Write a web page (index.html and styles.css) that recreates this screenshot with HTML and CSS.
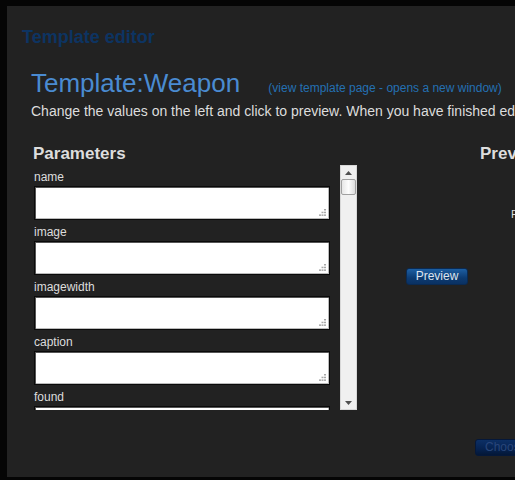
FILE: index.html
```html
<!DOCTYPE html>
<html>
<head>
<meta charset="utf-8">
<link rel="stylesheet" href="styles.css">
</head>
<body>
<div class="panel">
  <h1 class="editor-title">Template editor</h1>
  <div class="content">
    <h2 class="template-name">Template:Weapon <a class="view-link" href="#">(view template page - opens a new window)</a></h2>
    <p class="instructions">Change the values on the left and click to preview. When you have finished editing, click Choose.</p>
    <div class="columns">
      <div class="params-col">
        <h3 class="col-heading">Parameters</h3>
        <div class="scroll-box">
          <div class="param-list">
            <div class="param">
              <div class="param-label">name</div>
              <div class="field"><textarea></textarea><svg class="grip" width="7" height="7" viewBox="0 0 7 7"><rect x="5" y="0" width="2" height="1.5"/><rect x="2.5" y="2.7" width="2" height="1.5"/><rect x="5" y="2.7" width="2" height="1.5"/><rect x="0" y="5.4" width="2" height="1.5"/><rect x="2.5" y="5.4" width="2" height="1.5"/><rect x="5" y="5.4" width="2" height="1.5"/></svg></div>
            </div>
            <div class="param">
              <div class="param-label">image</div>
              <div class="field"><textarea></textarea><svg class="grip" width="7" height="7" viewBox="0 0 7 7"><rect x="5" y="0" width="2" height="1.5"/><rect x="2.5" y="2.7" width="2" height="1.5"/><rect x="5" y="2.7" width="2" height="1.5"/><rect x="0" y="5.4" width="2" height="1.5"/><rect x="2.5" y="5.4" width="2" height="1.5"/><rect x="5" y="5.4" width="2" height="1.5"/></svg></div>
            </div>
            <div class="param">
              <div class="param-label">imagewidth</div>
              <div class="field"><textarea></textarea><svg class="grip" width="7" height="7" viewBox="0 0 7 7"><rect x="5" y="0" width="2" height="1.5"/><rect x="2.5" y="2.7" width="2" height="1.5"/><rect x="5" y="2.7" width="2" height="1.5"/><rect x="0" y="5.4" width="2" height="1.5"/><rect x="2.5" y="5.4" width="2" height="1.5"/><rect x="5" y="5.4" width="2" height="1.5"/></svg></div>
            </div>
            <div class="param">
              <div class="param-label">caption</div>
              <div class="field"><textarea></textarea><svg class="grip" width="7" height="7" viewBox="0 0 7 7"><rect x="5" y="0" width="2" height="1.5"/><rect x="2.5" y="2.7" width="2" height="1.5"/><rect x="5" y="2.7" width="2" height="1.5"/><rect x="0" y="5.4" width="2" height="1.5"/><rect x="2.5" y="5.4" width="2" height="1.5"/><rect x="5" y="5.4" width="2" height="1.5"/></svg></div>
            </div>
            <div class="param">
              <div class="param-label">found</div>
              <div class="field"><textarea></textarea><svg class="grip" width="7" height="7" viewBox="0 0 7 7"><rect x="5" y="0" width="2" height="1.5"/><rect x="2.5" y="2.7" width="2" height="1.5"/><rect x="5" y="2.7" width="2" height="1.5"/><rect x="0" y="5.4" width="2" height="1.5"/><rect x="2.5" y="5.4" width="2" height="1.5"/><rect x="5" y="5.4" width="2" height="1.5"/></svg></div>
            </div>
          </div>
          <div class="scrollbar">
            <svg class="arrow" width="7" height="4" viewBox="0 0 7 4"><path d="M0 4 L3.5 0 L7 4 Z"/></svg>
            <div class="thumb"></div>
            <div class="track"></div>
            <svg class="arrow" width="7" height="4" viewBox="0 0 7 4"><path d="M0 0 L7 0 L3.5 4 Z"/></svg>
          </div>
        </div>
      </div>
      <div class="action-col">
        <button class="btn btn-preview">Preview</button>
      </div>
      <div class="preview-col">
        <h3 class="col-heading preview-heading">Preview</h3>
        <p class="preview-note">Press Preview to see the result</p>
        <button class="btn btn-choose">Choose</button>
      </div>
    </div>
  </div>
</div>
</body>
</html>
```

FILE: styles.css
```css
html, body {
  margin: 0;
  padding: 0;
  background: #050505;
  width: 515px;
  height: 480px;
  overflow: hidden;
}

body {
  font-family: "Liberation Sans", Arial, sans-serif;
  padding: 6px 0 0 7px;
  box-sizing: border-box;
}

.panel {
  background: #222222;
  height: 471px;
  width: 508px;
  overflow: hidden;
}

.editor-title {
  margin: 0;
  padding: 20px 0 0 15px;
  font-size: 18px;
  line-height: 22px;
  font-weight: bold;
  color: #0d3462;
  white-space: nowrap;
}

.content {
  padding-left: 24px;
  width: 800px;
}

.template-name {
  margin: 20px 0 0 0;
  font-size: 26px;
  line-height: 30px;
  font-weight: normal;
  color: #4a8bd1;
  white-space: nowrap;
}

.view-link {
  font-size: 12px;
  color: #2470b3;
  text-decoration: none;
  margin-left: 21px;
}

.instructions {
  margin: -1px 0 0 0;
  font-size: 14px;
  line-height: 18px;
  color: #dddddd;
  white-space: nowrap;
}

.columns {
  display: flex;
  align-items: flex-start;
  margin-top: 24px;
}

.params-col {
  padding-left: 2px;
  width: 324px;
}

.col-heading {
  margin: 0;
  font-size: 17px;
  line-height: 20px;
  font-weight: bold;
  color: #dddddd;
}

.scroll-box {
  margin-top: 1px;
  height: 245px;
  display: flex;
  overflow: hidden;
}

.param-list {
  width: 307px;
  padding-top: 5px;
  overflow: hidden;
}

.param {
  margin-bottom: 5px;
  padding-left: 1px;
}

.param-label {
  font-size: 12px;
  line-height: 15px;
  color: #dddddd;
  margin-bottom: 1px;
}

.field {
  position: relative;
  width: 296px;
  height: 34px;
}

.field textarea {
  display: block;
  box-sizing: border-box;
  width: 296px;
  height: 34px;
  margin: 0;
  border: 1px solid #0a0a0a;
  box-shadow: inset 1px 1px 0 #555, inset -1px -1px 0 #bbb;
  background: #ffffff;
  resize: none;
  padding: 2px;
}

.grip {
  position: absolute;
  right: 4px;
  bottom: 4px;
  fill: #a8a8a8;
}

.scrollbar {
  margin-left: 10px;
  width: 17px;
  height: 245px;
  box-sizing: border-box;
  background: #f0f0f0;
  border: 1px solid #d8d8d8;
  display: flex;
  flex-direction: column;
  align-items: center;
}

.scrollbar .arrow {
  fill: #505050;
  margin: 5px 0 4px;
  flex: none;
}

.thumb {
  width: 15px;
  height: 16px;
  box-sizing: border-box;
  border: 1px solid #a0a0a0;
  border-radius: 2px;
  background: linear-gradient(to right, #e6e6e6, #fdfdfd 50%, #dcdcdc);
  flex: none;
}

.track {
  flex: 1;
}

.action-col {
  width: 118px;
  flex: none;
}

.btn {
  font-family: "Liberation Sans", Arial, sans-serif;
  font-size: 12px;
  line-height: 15px;
  height: 17px;
  padding: 0 8px;
  border: 1px solid #0a2a52;
  border-radius: 3px;
  cursor: pointer;
}

.btn-preview {
  margin: 124px 0 0 49px;
  width: 62px;
  color: #dde4ee;
  background: linear-gradient(to bottom, #1d5fa3, #0c3b72 60%, #0a3163);
}

.preview-col {
  flex: none;
  width: 200px;
}

.preview-heading {
  padding-left: 5px;
}

.preview-note {
  margin: 44px 0 0 36px;
  font-size: 11px;
  line-height: 12px;
  color: #dddddd;
  white-space: nowrap;
}

.btn-choose {
  margin-top: 219px;
  color: #29467a;
  border-color: #05183a;
  background: linear-gradient(to bottom, #0c2f66, #06224f 60%, #031737);
  padding: 0 9px;
}
```
